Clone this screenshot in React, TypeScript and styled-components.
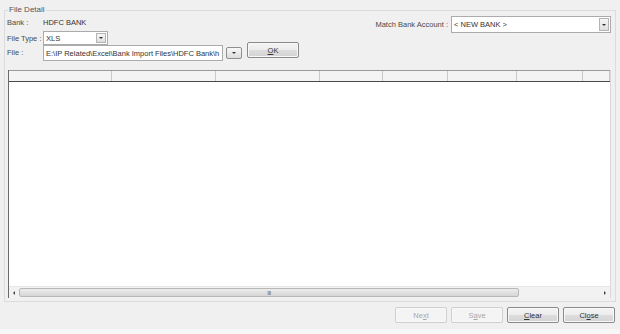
import React from 'react';
import styled, { createGlobalStyle } from 'styled-components';

const GlobalStyle = createGlobalStyle`
  body {
    margin: 0;
    font-family: "Liberation Sans", Arial, sans-serif;
    background: #f0f0f0;
  }
`;

const Window = styled.div`
  width: 620px;
  height: 334px;
  box-sizing: border-box;
  padding-top: 4px;
  background: #f0f0f0;
  font-size: 7.5px;
  color: #4a4a4a;
  display: flex;
  flex-direction: column;
  overflow: hidden;
  border-bottom: 5px solid #f7f7f7;
`;

const GroupBox = styled.fieldset`
  margin: 0 4px;
  padding: 0 4px 2px 2px;
  border: 1px solid #dcdcdc;
  min-width: 0;
  height: 298px;
  box-sizing: border-box;
`;

const Legend = styled.legend`
  font-size: 8px;
  line-height: 12px;
  padding: 0 1px;
  margin-left: 1px;
  color: #555;
`;

const FormArea = styled.div`
  display: flex;
  justify-content: space-between;
  align-items: flex-start;
  height: 54px;
`;

const LeftForm = styled.div`
  display: flex;
  flex-direction: column;
`;

const Row = styled.div<{ $h: number; $mt?: number }>`
  display: flex;
  align-items: center;
  height: ${(p) => p.$h}px;
  margin-top: ${(p) => p.$mt ?? 0}px;
`;

const Label = styled.span`
  width: 36px;
  flex: none;
  white-space: nowrap;
`;

const Value = styled.span`
  color: #333;
`;

const Combo = styled.div<{ $w: number; $h: number }>`
  width: ${(p) => p.$w}px;
  height: ${(p) => p.$h}px;
  box-sizing: border-box;
  border: 1px solid #ababab;
  background: #fff;
  display: flex;
  align-items: stretch;
`;

const ComboText = styled.span`
  flex: 1;
  padding-left: 2px;
  display: flex;
  align-items: center;
  color: #333;
  white-space: nowrap;
  overflow: hidden;
`;

const DropBtn = styled.span<{ $w?: number }>`
  width: ${(p) => p.$w ?? 10}px;
  flex: none;
  box-sizing: border-box;
  border: 1px solid #b4b4b4;
  margin: 1px;
  background: linear-gradient(#f6f6f6, #dedede);
  display: flex;
  align-items: center;
  justify-content: center;
`;

const Arrow = styled.span`
  width: 0;
  height: 0;
  border-left: 2px solid transparent;
  border-right: 2px solid transparent;
  border-top: 2px solid #333;
`;

const FileRow = styled.div`
  display: flex;
  align-items: flex-start;
  height: 16px;
`;

const PathBox = styled.div`
  width: 180px;
  height: 16px;
  box-sizing: border-box;
  border: 1px solid #ababab;
  background: #fff;
  padding-left: 2px;
  display: flex;
  align-items: center;
  white-space: nowrap;
  overflow: hidden;
  color: #333;
`;

const SmallBtn = styled.span`
  width: 16px;
  height: 12px;
  margin: 2px 0 0 3px;
  box-sizing: border-box;
  border: 1px solid #8e8e8e;
  border-radius: 2px;
  background: linear-gradient(#f8f8f8, #dcdcdc);
  display: flex;
  align-items: center;
  justify-content: center;
`;

const Button = styled.button<{ $disabled?: boolean }>`
  width: 52px;
  height: 16px;
  padding: 0;
  box-sizing: border-box;
  font-family: inherit;
  font-size: 7.5px;
  border-radius: 2px;
  border: 1px solid ${(p) => (p.$disabled ? '#cfcfcf' : '#8a8a8a')};
  background: ${(p) =>
    p.$disabled ? '#f4f4f4' : 'linear-gradient(#f4f4f4 0%, #ececec 50%, #dddddd 51%, #d3d3d3 100%)'};
  color: ${(p) => (p.$disabled ? '#a8a8a8' : '#333')};
  box-shadow: inset 0 0 0 1px #f8f8f8;
`;

const OkButton = styled(Button)`
  margin: -3px 0 0 5px;
`;

const RightForm = styled.div`
  display: flex;
  align-items: center;
  gap: 3px;
`;

const Grid = styled.div`
  margin-left: 1px;
  height: 228px;
  display: flex;
  flex-direction: column;
  background: #fff;
  border-left: 1px solid #6a6a6a;
  border-right: 1px solid #d8d8d8;
`;

const HeaderRow = styled.div`
  display: flex;
  height: 12px;
  box-sizing: border-box;
  border-top: 1px solid #9a9a9a;
  border-bottom: 1px solid #4a4a4a;
  background: #f4f4f4;
`;

const HeaderCell = styled.div<{ $w?: number }>`
  width: ${(p) => (p.$w ? `${p.$w}px` : 'auto')};
  flex: ${(p) => (p.$w ? 'none' : '1')};
  box-sizing: border-box;
  border-right: 1px solid #c8c8c8;
`;

const GridBody = styled.div`
  flex: 1;
`;

const HScroll = styled.div`
  height: 11px;
  display: flex;
  align-items: center;
  background: #f2f2f2;
  border-top: 1px solid #e6e6e6;
`;

const ScrollArrow = styled.span<{ $dir: 'left' | 'right' }>`
  width: 10px;
  flex: none;
  display: flex;
  justify-content: center;
  &::before {
    content: '';
    border-top: 2px solid transparent;
    border-bottom: 2px solid transparent;
    ${(p) => (p.$dir === 'left' ? 'border-right: 2px solid #444;' : 'border-left: 2px solid #444;')}
  }
`;

const Track = styled.div`
  flex: 1;
  height: 9px;
  display: flex;
`;

const Thumb = styled.div`
  width: 500px;
  box-sizing: border-box;
  border: 1px solid #b8b8b8;
  border-radius: 2px;
  background: linear-gradient(#ececec, #d6d6d6);
  display: flex;
  align-items: center;
  justify-content: center;
  font-size: 6px;
  letter-spacing: -0.5px;
  color: #666;
  line-height: 1;
`;

const Footer = styled.div`
  display: flex;
  justify-content: flex-end;
  gap: 4px;
  padding: 5px 5px 0 0;
`;

const columns = [103, 104, 104, 63, 65, 69, 66];

export default function App() {
  return (
    <>
      <GlobalStyle />
      <Window>
        <GroupBox>
          <Legend>File Detail</Legend>
          <FormArea>
            <LeftForm>
              <Row $h={12}>
                <Label>Bank :</Label>
                <Value>HDFC BANK</Value>
              </Row>
              <Row $h={14} $mt={3}>
                <Label>File Type :</Label>
                <Combo $w={65} $h={14}>
                  <ComboText>XLS</ComboText>
                  <DropBtn>
                    <Arrow />
                  </DropBtn>
                </Combo>
              </Row>
              <FileRow>
                <Label style={{ lineHeight: '16px' }}>File :</Label>
                <PathBox>E:\IP Related\Excel\Bank Import Files\HDFC Bank\h</PathBox>
                <SmallBtn>
                  <Arrow />
                </SmallBtn>
                <OkButton>
                  <u>O</u>K
                </OkButton>
              </FileRow>
            </LeftForm>
            <RightForm>
              <span>Match Bank Account :</span>
              <Combo $w={160} $h={17}>
                <ComboText>&lt; NEW BANK &gt;</ComboText>
                <DropBtn $w={10}>
                  <Arrow />
                </DropBtn>
              </Combo>
            </RightForm>
          </FormArea>
          <Grid>
            <HeaderRow>
              {columns.map((w, i) => (
                <HeaderCell key={i} $w={w} />
              ))}
              <HeaderCell />
            </HeaderRow>
            <GridBody />
            <HScroll>
              <ScrollArrow $dir="left" />
              <Track>
                <Thumb>III</Thumb>
              </Track>
              <ScrollArrow $dir="right" />
            </HScroll>
          </Grid>
        </GroupBox>
        <Footer>
          <Button $disabled>
            Ne<u>x</u>t
          </Button>
          <Button $disabled>
            S<u>a</u>ve
          </Button>
          <Button>
            <u>C</u>lear
          </Button>
          <Button>
            Cl<u>o</u>se
          </Button>
        </Footer>
      </Window>
    </>
  );
}
